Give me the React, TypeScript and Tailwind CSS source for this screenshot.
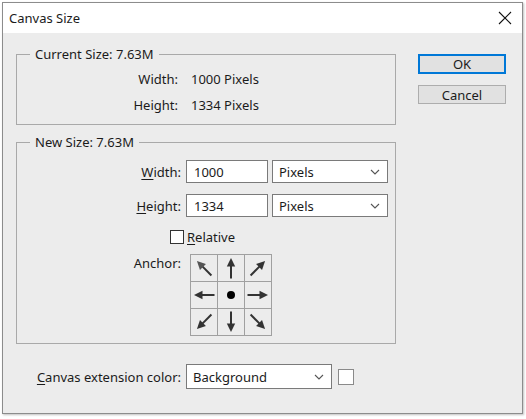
import React from 'react'

const font = { fontFamily: '"Noto Sans", "Open Sans", Arial, sans-serif' }

// underlined access-key letter
const Key = ({ children }: { children: React.ReactNode }) => (
  <span className="underline underline-offset-2 decoration-1">{children}</span>
)

const Chevron = () => (
  <svg width="10" height="6" viewBox="0 0 10 6" className="shrink-0">
    <polyline points="1,1 5,5 9,1" fill="none" stroke="#555" strokeWidth="1.1" />
  </svg>
)

const Select = ({ value, width }: { value: string; width: string }) => (
  <div className={`${width} h-full bg-white border border-[#7a7a7a] flex items-center justify-between pl-[6px] pr-[7px]`}>
    <span>{value}</span>
    <Chevron />
  </div>
)

// arrow drawn pointing up, rotated around cell centre
const Arrow = ({ angle, light }: { angle: number; light?: boolean }) => (
  <svg width="26" height="26" viewBox="0 0 26 26">
    <g transform={`rotate(${angle} 13 13)`}>
      <line x1="13" y1="23.5" x2="13" y2="10" stroke="#333" strokeWidth="2" />
      <polygon points="13,3 8.8,11.5 17.2,11.5" fill={light ? '#555' : '#333'} />
    </g>
  </svg>
)

const anchorCells: (number | null)[] = [-45, 0, 45, -90, null, 90, -135, 180, 135]

const AnchorGrid = () => (
  <div className="grid grid-cols-[26px_26px_26px] grid-rows-[26px_26px_26px] gap-px bg-[#a0a0a0] border border-[#a0a0a0] w-fit">
    {anchorCells.map((a, i) => (
      <div key={i} className="bg-[#ececec] flex items-center justify-center">
        {a === null ? (
          <div className="w-[8px] h-[8px] rounded-full bg-black" />
        ) : (
          <Arrow angle={a} light={i === 0} />
        )}
      </div>
    ))}
  </div>
)

export default function App() {
  return (
    <div className="w-[526px] h-[419px] bg-white pt-[2px] pl-[2px] text-[13px] text-[#1b1b1b] leading-[16px]" style={font}>
      <div className="w-[521px] h-[412px] border border-[#8c8c8c] flex flex-col shadow-[1px_1px_2px_rgba(0,0,0,0.25)]">
        {/* title bar */}
        <div className="h-[30px] bg-white flex items-center justify-between pl-[6px] pr-[10px]">
          <span>Canvas Size</span>
          <svg width="14" height="14" viewBox="0 0 14 14">
            <path d="M1 1 L13 13 M13 1 L1 13" stroke="#111" strokeWidth="1.1" />
          </svg>
        </div>

        {/* body */}
        <div className="flex-1 bg-[#ececec] flex pl-[13px] pt-[13px]">
          <div className="w-[380px] flex flex-col">
            {/* current size */}
            <fieldset className="border border-[#a9a9a9]">
              <legend className="ml-[13px] px-[5px]">Current Size: 7.63M</legend>
              <div className="grid grid-cols-[161px_1fr] gap-x-[13px] mt-[4px] mb-[6px]">
                <div className="h-[26px] flex items-center justify-end">Width:</div>
                <div className="h-[26px] flex items-center">1000 Pixels</div>
                <div className="h-[26px] flex items-center justify-end">Height:</div>
                <div className="h-[26px] flex items-center">1334 Pixels</div>
              </div>
            </fieldset>

            {/* new size */}
            <fieldset className="border border-[#a9a9a9] mt-[9px]">
              <legend className="ml-[13px] px-[5px]">New Size: 7.63M</legend>
              <div className="flex flex-col pb-[7px]">
                <div className="flex items-center h-[23px] mt-[10px]">
                  <div className="w-[164px] text-right"><Key>W</Key>idth:</div>
                  <div className="ml-[5px] w-[82px] h-full bg-white border border-[#7a7a7a] flex items-center pl-[7px]">1000</div>
                  <div className="ml-[4px] h-full"><Select value="Pixels" width="w-[116px]" /></div>
                </div>
                <div className="flex items-center h-[23px] mt-[11px]">
                  <div className="w-[164px] text-right"><Key>H</Key>eight:</div>
                  <div className="ml-[5px] w-[82px] h-full bg-white border border-[#7a7a7a] flex items-center pl-[7px]">1334</div>
                  <div className="ml-[4px] h-full"><Select value="Pixels" width="w-[116px]" /></div>
                </div>
                <div className="flex items-center h-[14px] mt-[13px] pl-[153px]">
                  <div className="w-[14px] h-[14px] bg-white border border-[#333]" />
                  <span className="ml-[3px]"><Key>R</Key>elative</span>
                </div>
                <div className="flex items-start mt-[10px]">
                  <div className="w-[164px] text-right mt-[1px]">Anchor:</div>
                  <div className="ml-[9px]"><AnchorGrid /></div>
                </div>
              </div>
            </fieldset>

            {/* extension colour */}
            <div className="flex items-center h-[25px] mt-[20px]">
              <div className="w-[165px] text-right"><Key>C</Key>anvas extension color:</div>
              <div className="ml-[5px] h-full"><Select value="Background" width="w-[146px]" /></div>
              <div className="ml-[6px] w-[16px] h-[16px] bg-white border border-[#8a8a8a]" />
            </div>
          </div>

          {/* buttons */}
          <div className="ml-[22px] flex flex-col pt-[8px]">
            <button className="w-[88px] h-[20px] bg-[#e1e1e1] border-2 border-[#0078d7] flex items-center justify-center">OK</button>
            <button className="w-[88px] h-[19px] mt-[11px] bg-[#e1e1e1] border border-[#adadad] flex items-center justify-center">Cancel</button>
          </div>
        </div>
      </div>
    </div>
  )
}
